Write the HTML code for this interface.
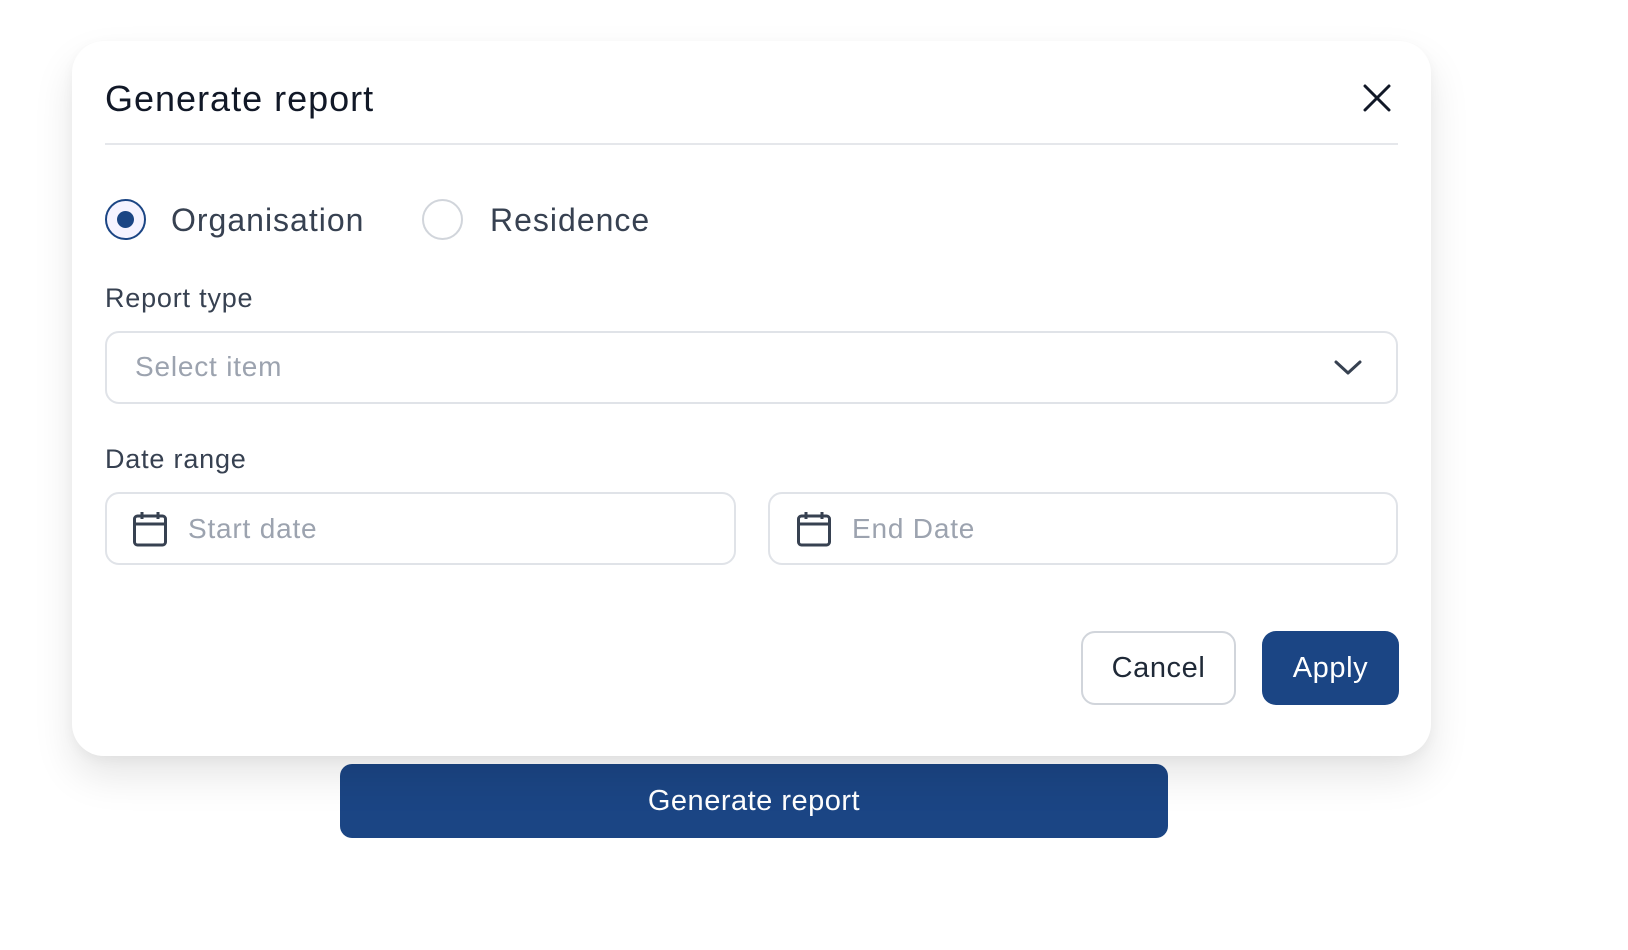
<!DOCTYPE html>
<html><head><meta charset="utf-8"><style>
*{box-sizing:border-box;margin:0;padding:0}
body{width:1628px;height:950px;background:#fff;font-family:"Liberation Sans",sans-serif;position:relative;overflow:hidden}
.gen{position:absolute;left:340px;top:764px;width:828px;height:74px;background:#1b4584;border-radius:12px;color:#fff;font-size:29px;letter-spacing:.5px;display:flex;align-items:center;justify-content:center}
.modal{position:absolute;left:72px;top:41px;width:1359px;height:715px;background:#fff;border-radius:32px;box-shadow:0 20px 40px rgba(0,0,0,.10),0 4px 12px rgba(0,0,0,.04)}
.a{position:absolute}
.title{left:33px;top:36px;font-size:36px;color:#111827;line-height:44px;letter-spacing:1px}
.div{left:33px;top:102px;height:2px;background:#e5e7eb}
.radio{width:41px;height:41px;border-radius:50%;border:2px solid #d1d5db;background:#fff}
.radio.on{border-color:#1b4584;background:#f5f3ff}
.radio.on:after{content:"";position:absolute;left:10px;top:10px;width:17px;height:17px;border-radius:50%;background:#1b4584}
.rl{font-size:32px;color:#374151;line-height:40px;letter-spacing:1px}
.lbl{font-size:27px;color:#374151;line-height:34px;letter-spacing:.8px}
.box{border:2px solid #e0e3e8;border-radius:14px;background:#fff}
.ph{font-size:28px;color:#9ca3af;line-height:34px;letter-spacing:.8px}
.btn{border-radius:14px;font-size:29px;letter-spacing:.6px;display:flex;align-items:center;justify-content:center}
</style></head><body>
<div class="gen">Generate report</div>
<div class="modal">
<div class="a title">Generate report</div>
<svg class="a" style="left:1291px;top:43px" width="28" height="28" viewBox="0 0 28 28"><path d="M2 2L26 26M26 2L2 26" stroke="#111827" stroke-width="3" stroke-linecap="round"/></svg>
<div class="a div" style="width:1293px"></div>
<div class="a radio on" style="left:33px;top:158px"></div>
<div class="a rl" style="left:99px;top:159px">Organisation</div>
<div class="a radio" style="left:350px;top:158px"></div>
<div class="a rl" style="left:418px;top:159px">Residence</div>
<div class="a lbl" style="left:33px;top:240px">Report type</div>
<div class="a box" style="left:33px;top:290px;width:1293px;height:73px"></div>
<div class="a ph" style="left:63px;top:309px">Select item</div>
<svg class="a" style="left:1261px;top:318px" width="30" height="18" viewBox="0 0 30 18"><path d="M3 3L15 14L27 3" fill="none" stroke="#374151" stroke-width="3" stroke-linecap="round" stroke-linejoin="round"/></svg>
<div class="a lbl" style="left:33px;top:401px">Date range</div>
<div class="a box" style="left:33px;top:451px;width:631px;height:73px"></div>
<div class="a box" style="left:696px;top:451px;width:630px;height:73px"></div>
<svg class="a" style="left:60px;top:469px" width="36" height="38" viewBox="0 0 36 38"><rect x="2.5" y="6" width="31" height="29" rx="3" fill="none" stroke="#374151" stroke-width="3"/><path d="M2.5 14H33.5M10 2V9M26 2V9" stroke="#374151" stroke-width="3"/></svg>
<div class="a ph" style="left:116px;top:471px">Start date</div>
<svg class="a" style="left:724px;top:469px" width="36" height="38" viewBox="0 0 36 38"><rect x="2.5" y="6" width="31" height="29" rx="3" fill="none" stroke="#374151" stroke-width="3"/><path d="M2.5 14H33.5M10 2V9M26 2V9" stroke="#374151" stroke-width="3"/></svg>
<div class="a ph" style="left:780px;top:471px">End Date</div>
<div class="a btn" style="left:1009px;top:590px;width:155px;height:74px;border:2px solid #d1d5db;color:#1f2937">Cancel</div>
<div class="a btn" style="left:1190px;top:590px;width:137px;height:74px;background:#1b4584;color:#fff">Apply</div>
</div>
</body></html>
